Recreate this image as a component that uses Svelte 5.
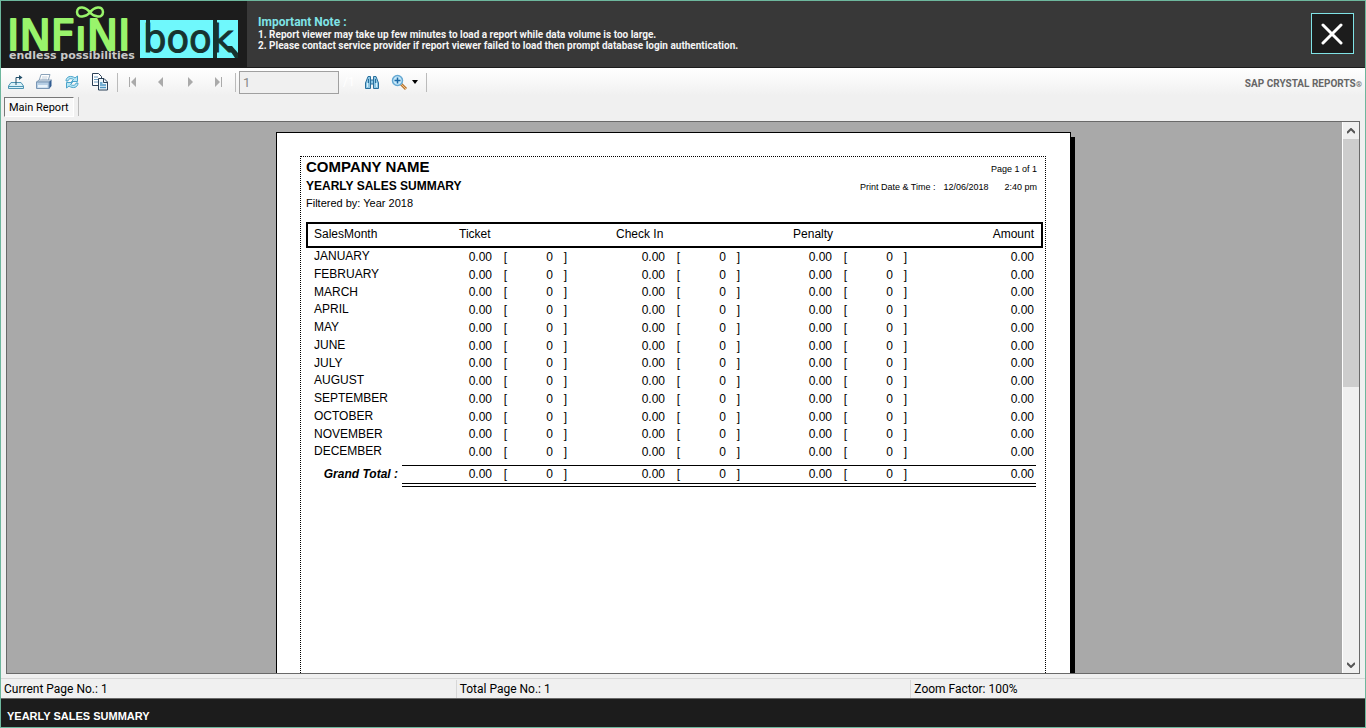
<script>
    const months = [
        "JANUARY", "FEBRUARY", "MARCH", "APRIL", "MAY", "JUNE", "JULY",
        "AUGUST", "SEPTEMBER", "OCTOBER", "NOVEMBER", "DECEMBER"
    ];
    const emptyRow = () => ({
        groups: [
            { value: 0, count: 0 },
            { value: 0, count: 0 },
            { value: 0, count: 0 }
        ],
        amount: 0
    });

    const rows = months.map(month => ({ month, ...emptyRow() }));
    const total = emptyRow();

    const money = value => value.toFixed(2);

    let currentPage = "1";
    let closed = false;
    const close = () => closed = true;
</script>

{#if !closed}
<div class="window">
    <header>
        <div class="logo">
            <svg width="246" height="66" viewBox="0 0 246 66" role="img" aria-label="Infinibook, endless possibilities">
                <path d="M89 11.500C85 6 76.500 4 76 11C76.500 18 85 16 89 11.500C93 6 101.500 4 102 11C101.500 18 93 16 89 11.500Z" fill="none" stroke="#99f46b" stroke-width="2.500" />
                <text class="infini" x="6" y="49">INFıNI</text>
                <rect x="139" y="19" width="98" height="38" fill="#6ff8fc" />
                <rect x="212" y="19" width="4" height="38" fill="#17332f" />
                <rect x="145" y="19" width="4" height="32" fill="#17332f" />
                <text class="book" x="142" y="51">book</text>
                <path d="M226 45H231L237 52V57H234Z" fill="#17332f" />
                <text class="tagline" x="8" y="58">endless possibilities</text>
            </svg>
        </div>
        <div class="note">
            <h1>Important Note :</h1>
            <p>1. Report viewer may take up few minutes to load a report while data volume is too large.</p>
            <p>2. Please contact service provider if report viewer failed to load then prompt database login authentication.</p>
        </div>
        <button class="close" aria-label="Close" on:click={close}>
            <svg width="24" height="22" viewBox="0 0 24 22">
                <path d="M2 2L20 20M20 2L2 20" stroke="#fff" stroke-width="3" stroke-linecap="round" />
            </svg>
        </button>
    </header>

    <div class="toolbar">
        <button class="tool" aria-label="Export report">
            <svg width="18" height="18" viewBox="0 0 18 18" fill="none">
                <path d="M4 9.500H14L16.500 13V15.500H1.500V13Z" fill="#d9f1f8" stroke="#4d94b3" />
                <path d="M2 13.500H16" stroke="#4d94b3" />
                <path d="M9 12V4.500H14" stroke="#23506b" />
                <path d="M12 2L15.500 4.500L12 7Z" fill="#23506b" />
            </svg>
        </button>
        <button class="tool" aria-label="Print report">
            <svg width="18" height="18" viewBox="0 0 18 18">
                <path d="M6 1.500H15L13 8H4Z" fill="#fff" stroke="#8ba3ba" />
                <path d="M7 4H12.500M6.500 6H12" stroke="#c0cedb" />
                <path d="M1.500 9L4 7H16.500L14 9Z" fill="#dce7f2" stroke="#8ba3ba" />
                <path d="M14 9L16.500 7V13L14 16Z" fill="#315c91" />
                <path d="M1.500 9H14V15.500H1.500Z" fill="#b7cfe5" stroke="#7896b5" />
                <path d="M3 12H12.500V14.500H3Z" fill="#e9f3fa" />
            </svg>
        </button>
        <button class="tool" aria-label="Refresh">
            <svg width="18" height="18" viewBox="0 0 18 18" stroke="#4ba3ca">
                <path d="M3 8C3 3.500 8 2 12 5L14.500 3V8.500H8.500L10.500 6.500C8 5 5.500 5.500 5 8Z" fill="#b8e7f5" />
                <path d="M15 10C15 14.500 10 16 6 13L3.500 15V9.500H9.500L7.500 11.500C10 13 12.500 12.500 13 10Z" fill="#b8e7f5" />
            </svg>
        </button>
        <button class="tool" aria-label="Copy">
            <svg width="18" height="18" viewBox="0 0 18 18">
                <path d="M1.500 .5H7.500L10.500 3.500V12.500H1.500Z" fill="#fff" stroke="#2b4057" />
                <path d="M3 4H7M3 6.500H8M3 9H8" stroke="#6a9cc0" />
                <path d="M7.500 5.500H13L16.500 9V17H7.500Z" fill="#eef8fd" stroke="#2b4057" />
                <path d="M12.500 5.500V9.500H16.500" fill="none" stroke="#2b4057" />
                <path d="M9 10H11.500M9 12H15M9 14.500H15" stroke="#4b94c2" stroke-width="1.500" />
            </svg>
        </button>
        <span class="separator"></span>
        <button class="tool nav" aria-label="First page" disabled>
            <svg width="10" height="10" viewBox="0 0 10 10"><path d="M1 0H2V10H1ZM8 0V10L3 5Z" fill="#aaa" /></svg>
        </button>
        <button class="tool nav" aria-label="Previous page" disabled>
            <svg width="10" height="10" viewBox="0 0 10 10"><path d="M6 0V10L1 5Z" fill="#aaa" /></svg>
        </button>
        <button class="tool nav" aria-label="Next page" disabled>
            <svg width="10" height="10" viewBox="0 0 10 10"><path d="M2 0V10L7 5Z" fill="#aaa" /></svg>
        </button>
        <button class="tool nav" aria-label="Last page" disabled>
            <svg width="10" height="10" viewBox="0 0 10 10"><path d="M0 0V10L5 5ZM6 0H7V10H6Z" fill="#aaa" /></svg>
        </button>
        <span class="separator"></span>
        <input id="page-number" class="page-number" aria-label="Page number" bind:value={currentPage} disabled>
        <label class="page-count" for="page-number">/1</label>
        <button class="tool" aria-label="Find text">
            <svg width="14" height="13" viewBox="0 0 14 13">
                <path d="M3 .5H5.500V4H8.500V.5H11L13.500 7V12.500H8.500V8H5.500V12.500H.5V7Z" fill="#8fc7e4" stroke="#286f9d" />
                <path d="M3.500 3V7M5.500 2V8M8.500 2V8M10.500 3V7" stroke="#286f9d" />
                <path d="M2.500 7V11M11.500 7V11" stroke="#d9f1fb" />
            </svg>
        </button>
        <button class="tool zoom" aria-label="Zoom">
            <svg width="17" height="17" viewBox="0 0 17 17">
                <path d="M10 10L15 15" stroke="#b97832" stroke-width="3" />
                <path d="M10 10L15 15" stroke="#f3c38b" stroke-width="1" />
                <circle cx="6.500" cy="6.500" r="5" fill="#c6e9fa" stroke="#65a8d2" stroke-width="1.500" />
                <path d="M6.500 3.500V9.500M3.500 6.500H9.500" stroke="#1b68a5" stroke-width="1.500" />
            </svg>
            <svg width="6" height="4" viewBox="0 0 6 4"><path d="M0 0H6L3 4Z" fill="#000" /></svg>
        </button>
        <span class="separator"></span>
        <span class="brand">SAP CRYSTAL REPORTS<small>®</small></span>
    </div>

    <nav class="tabs">
        <button class="tab">Main Report</button>
        <span class="separator"></span>
    </nav>

    <main class="viewer">
        <div class="canvas">
            <article class="paper">
                <section class="printable">
                    <div class="heading">
                        <div>
                            <h2>COMPANY NAME</h2>
                            <h3>YEARLY SALES SUMMARY</h3>
                            <p>Filtered by: Year 2018</p>
                        </div>
                        <div class="print-info">
                            <p>Page 1 of 1</p>
                            <p class="printed"><span>Print Date &amp; Time :</span><span>12/06/2018</span><span class="time">2:40 pm</span></p>
                        </div>
                    </div>
                    <table>
                        <colgroup>
                            <col class="month-col">
                            <col class="ticket-col"><col class="open-col"><col class="count-col"><col class="end-col">
                            <col class="checkin-col"><col class="open-col"><col class="count-col"><col class="end-col">
                            <col class="penalty-col"><col class="open-col"><col class="count-col"><col class="end-col">
                            <col>
                            <col class="edge-col">
                        </colgroup>
                        <thead>
                            <tr>
                                <th class="month" scope="col">SalesMonth</th>
                                <th class="ticket" scope="colgroup" colspan="4">Ticket</th>
                                <th class="checkin" scope="colgroup" colspan="4">Check In</th>
                                <th class="penalty" scope="colgroup" colspan="4">Penalty</th>
                                <th class="amount" scope="col">Amount</th>
                                <td></td>
                            </tr>
                        </thead>
                        <tbody>
                            {#each rows as row}
                            <tr>
                                <th class="month" scope="row">{row.month}</th>
                                {#each row.groups as group}
                                <td>{money(group.value)}</td>
                                <td class="open">[</td>
                                <td>{group.count}</td>
                                <td>]</td>
                                {/each}
                                <td class="amount">{money(row.amount)}</td>
                                <td></td>
                            </tr>
                            {/each}
                        </tbody>
                        <tfoot>
                            <tr class="gap"><td colspan="15"></td></tr>
                            <tr class="total">
                                <th scope="row">Grand Total :</th>
                                {#each total.groups as group}
                                <td class="sum">{money(group.value)}</td>
                                <td class="sum open">[</td>
                                <td class="sum">{group.count}</td>
                                <td class="sum">]</td>
                                {/each}
                                <td class="sum amount">{money(total.amount)}</td>
                                <td></td>
                            </tr>
                        </tfoot>
                    </table>
                </section>
            </article>
        </div>
        <div class="scrollbar">
            <button aria-label="Scroll up">
                <svg width="8" height="6" viewBox="0 0 8 6"><path d="M0 5L4 1L8 5" fill="none" stroke="#555" stroke-width="2" /></svg>
            </button>
            <div class="track"><div class="thumb"></div></div>
            <button aria-label="Scroll down">
                <svg width="8" height="6" viewBox="0 0 8 6"><path d="M0 1L4 5L8 1" fill="none" stroke="#555" stroke-width="2" /></svg>
            </button>
        </div>
    </main>

    <div class="status">
        <span>Current Page No.: 1</span>
        <span>Total Page No.: 1</span>
        <span>Zoom Factor: 100%</span>
    </div>

    <footer>YEARLY SALES SUMMARY</footer>
</div>
{/if}

<style>
    :global(body) {
        margin: 0;
        background: #f0f0f0;
    }
    .window {
        --sans: "Liberation Sans", Arial, sans-serif;
        --ui: Roboto, "Segoe UI", sans-serif;
        box-sizing: border-box;
        height: 100vh;
        display: flex;
        flex-direction: column;
        border: 1px solid #6db79d;
        background: #f0f0f0;
        font-family: var(--sans);
        color: #000;
    }
    h1, h2, h3, p {
        margin: 0;
    }
    button {
        padding: 0;
        border: none;
        background: transparent;
        font-family: inherit;
        color: inherit;
    }
    header {
        flex: none;
        display: flex;
        height: 66px;
        background: #383838;
        border-bottom: 1px solid #1c1c1c;
    }
    .logo {
        width: 246px;
        background: #1c1c1c;
    }
    .logo svg {
        display: block;
    }
    .infini {
        font-family: "DejaVu Sans", sans-serif;
        font-size: 42px;
        fill: #99f46b;
        stroke: #99f46b;
        stroke-width: 2px;
        stroke-linejoin: round;
    }
    .book {
        font-family: "DejaVu Sans", sans-serif;
        font-size: 37px;
        fill: #17332f;
        stroke: #17332f;
        stroke-width: 1px;
    }
    .tagline {
        font-family: "DejaVu Sans", sans-serif;
        font-size: 11px;
        font-weight: bold;
        fill: #c8c8c8;
    }
    .note {
        flex: 1;
        padding: 14px 0 0 11px;
        color: #f4f4f4;
        font-family: var(--ui);
        font-size: 10px;
        font-weight: bold;
        line-height: 11px;
    }
    .note h1 {
        color: #7fe3e6;
        font-size: 12px;
        line-height: 14px;
    }
    .close {
        display: flex;
        align-items: center;
        justify-content: center;
        width: 43px;
        height: 41px;
        margin: 12px 11px 0 0;
        border: 1px solid #7fe3e6;
        background: #1c1c1c;
    }
    .toolbar {
        flex: none;
        display: flex;
        align-items: center;
        height: 28px;
        padding-left: 1px;
        background: linear-gradient(#fff, #f0f0f0);
    }
    .tool {
        display: flex;
        align-items: center;
        justify-content: center;
        width: 28px;
        height: 24px;
    }
    .nav {
        width: 29px;
    }
    .zoom {
        gap: 4px;
        width: 36px;
        margin-right: 1px;
    }
    .separator {
        width: 1px;
        height: 19px;
        margin: 0 0 0 3px;
        background: #bbb;
    }
    .nav + .separator {
        margin: 0 3px 0 1px;
    }
    .page-number {
        box-sizing: border-box;
        width: 100px;
        height: 23px;
        padding: 0 3px;
        border: 1px solid #a0a0a0;
        background: #f0f0f0;
        font-family: var(--ui);
        font-size: 13px;
        color: #888;
    }
    .page-count {
        width: 15px;
        padding-left: 4px;
        font-family: var(--ui);
        font-size: 12px;
        color: #fff;
    }
    .brand {
        margin-left: auto;
        padding: 3px 3px 0 0;
        font-family: var(--ui);
        font-size: 10px;
        font-weight: bold;
        color: #666;
    }
    .brand small {
        font-size: 8px;
    }
    .tabs {
        flex: none;
        display: flex;
        align-items: center;
        height: 25px;
        padding: 0 0 4px 3px;
        box-sizing: border-box;
    }
    .tab {
        height: 20px;
        padding: 1px 4px 0;
        border: 1px solid #fff;
        border-top-color: #777;
        border-left-color: #777;
        background: #f8f8f8;
        font-family: var(--ui);
        font-size: 11px;
    }
    .tabs .separator {
        margin-left: 4px;
    }
    .viewer {
        flex: 1;
        min-height: 0;
        display: flex;
        margin: 0 5px;
        border: 1px solid #696969;
        background: #a9a9a9;
    }
    .canvas {
        flex: 1;
        display: flex;
        justify-content: center;
        padding: 10px 2px 0 0;
        overflow: hidden;
    }
    .paper {
        box-sizing: border-box;
        flex: none;
        width: 795px;
        height: 1123px;
        padding: 23px 24px 23px 23px;
        border: 1px solid #000;
        background: #fff;
        box-shadow: 4px 5px #000;
    }
    .printable {
        box-sizing: border-box;
        height: 100%;
        padding: 0 2px 0 5px;
        border: 1px dotted #000;
    }
    .heading {
        display: flex;
        justify-content: space-between;
        height: 65px;
    }
    h2 {
        font-size: 15px;
        line-height: 20px;
    }
    h3 {
        font-size: 12px;
        line-height: 18px;
    }
    .heading p {
        font-size: 11px;
        line-height: 17px;
    }
    .heading .print-info {
        padding: 3px 6px 0 0;
        text-align: right;
    }
    .heading .print-info p {
        font-size: 9px;
        line-height: 18px;
    }
    .printed {
        display: flex;
        gap: 8px;
    }
    .time {
        padding-left: 8px;
    }
    table {
        width: 100%;
        table-layout: fixed;
        border-spacing: 0;
        font-size: 12px;
        line-height: 14px;
        text-align: right;
    }
    .month-col { width: 96px; }
    .ticket-col { width: 90px; }
    .checkin-col { width: 98px; }
    .penalty-col { width: 92px; }
    .open-col { width: 16px; }
    .count-col { width: 45px; }
    .end-col { width: 14px; }
    .edge-col { width: 7px; }
    th, td {
        padding: 0;
        font-weight: normal;
    }
    thead tr {
        height: 26px;
        outline: 2px solid #000;
        outline-offset: -2px;
    }
    thead th {
        padding-bottom: 3px;
        text-align: left;
    }
    .month {
        padding-left: 8px;
        text-align: left;
    }
    .ticket { padding-left: 57px; }
    .checkin { padding-left: 49px; }
    .penalty { padding-left: 53px; }
    .open {
        padding-right: 1px;
    }
    .amount {
        padding-right: 2px;
        text-align: right;
    }
    tbody tr {
        height: 18px;
    }
    tbody tr:nth-child(4n + 3) {
        height: 17px;
    }
    tbody th {
        padding-top: 1px;
        vertical-align: top;
    }
    tbody td {
        padding-bottom: 2px;
        vertical-align: bottom;
    }
    .gap {
        height: 4px;
    }
    .total {
        height: 22px;
    }
    .total th {
        padding: 0 4px 4px 0;
        font-weight: bold;
        font-style: italic;
    }
    .sum {
        padding-bottom: 2px;
        border-top: 1px solid #000;
        border-bottom: 4px double #000;
    }
    .scrollbar {
        display: flex;
        flex-direction: column;
        width: 16px;
        border-left: 1px solid #fff;
        background: #f0f0f0;
    }
    .scrollbar button {
        display: flex;
        align-items: center;
        justify-content: center;
        height: 17px;
    }
    .track {
        flex: 1;
    }
    .thumb {
        height: 48%;
        background: #cdcdcd;
    }
    .status {
        flex: none;
        display: grid;
        grid-template-columns: 1fr 1fr 1fr;
        margin-top: 4px;
        padding-top: 1px;
        border-top: 1px solid #d7d7d7;
        border-bottom: 1px solid #696969;
        font-family: var(--ui);
        font-size: 12px;
        line-height: 18px;
    }
    .status span {
        padding-left: 3px;
    }
    .status span + span {
        border-left: 1px solid #d7d7d7;
    }
    footer {
        flex: none;
        padding: 6px 0 0 6px;
        background: #1c1c1c;
        color: #fff;
        font-size: 11px;
        font-weight: bold;
        line-height: 22px;
    }
</style>
